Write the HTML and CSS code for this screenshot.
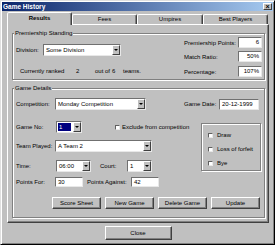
FILE: index.html
```html
<!DOCTYPE html>
<html lang="en">
<head>
    <meta charset="UTF-8">
    <title>Game History</title>
    <link rel="stylesheet" href="styles.css">
</head>
<body>

    <div class="window">
        <div class="titlebar">
            <span class="title">Game History</span>
            <span class="close-btn">×</span>
        </div>

        <div class="content">
            <div class="tabs">
                <div class="tab active">Results</div>
                <div class="tab">Fees</div>
                <div class="tab wide">Umpires</div>
                <div class="tab">Best Players</div>
            </div>

            <div class="panel">
                <fieldset class="group standing">
                    <legend>Premiership Standing</legend>
                    <div class="standing-cols">
                        <div class="standing-left">
                            <div class="row">
                                <span class="lbl w27">Division:</span>
                                <div class="select w78"><span class="select-text">Some Division</span><span class="arrow"></span></div>
                            </div>
                            <div class="ranked">
                                <span class="rk1">Currently ranked</span><span class="rk2">2</span><span class="rk3">out of</span><span class="rk4">6</span><span>teams.</span>
                            </div>
                        </div>
                        <div class="standing-right">
                            <div class="stat"><span class="lbl">Premiership Points:</span><div class="field num">6</div></div>
                            <div class="stat"><span class="lbl">Match Ratio:</span><div class="field num">50%</div></div>
                            <div class="stat"><span class="lbl">Percentage:</span><div class="field num">107%</div></div>
                        </div>
                    </div>
                </fieldset>

                <fieldset class="group details">
                    <legend>Game Details</legend>
                    <div class="row">
                        <span class="lbl w39">Competition:</span>
                        <div class="select w91"><span class="select-text">Monday Competition</span><span class="arrow"></span></div>
                        <div class="date">
                            <span class="lbl w35">Game Date:</span>
                            <div class="field w40">20-12-1999</div>
                        </div>
                    </div>

                    <div class="details-mid">
                        <div class="details-left">
                            <div class="row">
                                <span class="lbl w40">Game No:</span>
                                <div class="select w26"><span class="select-text"><span class="picked">1</span></span><span class="arrow"></span></div>
                                <span class="check exclude"></span><span>Exclude from competition</span>
                            </div>
                            <div class="row team">
                                <span class="lbl w39">Team Played:</span>
                                <div class="select w97"><span class="select-text">A Team 2</span><span class="arrow"></span></div>
                            </div>
                            <div class="row time">
                                <span class="lbl w40">Time:</span>
                                <div class="select w35"><span class="select-text">06:00</span><span class="arrow"></span></div>
                                <span class="lbl w27 court">Court:</span>
                                <div class="select w25"><span class="select-text">1</span><span class="arrow"></span></div>
                            </div>
                            <div class="row points">
                                <span class="lbl w39">Points For:</span>
                                <div class="field w28">30</div>
                                <span class="lbl w44 against">Points Against:</span>
                                <div class="field w28">42</div>
                            </div>
                        </div>

                        <div class="result-box">
                            <div class="check-row"><span class="check"></span><span>Draw</span></div>
                            <div class="check-row"><span class="check"></span><span>Loss of forfeit</span></div>
                            <div class="check-row"><span class="check"></span><span>Bye</span></div>
                        </div>
                    </div>

                    <div class="actions">
                        <button class="btn">Score Sheet</button>
                        <button class="btn">New Game</button>
                        <button class="btn">Delete Game</button>
                        <button class="btn">Update</button>
                    </div>
                </fieldset>
            </div>

            <div class="footer">
                <button class="btn btn-close">Close</button>
            </div>
        </div>
    </div>

</body>
</html>
```

FILE: styles.css
```css
* {
    box-sizing: border-box;
}

body {
    margin: 0;
    background: #c0c0c0;
    font-family: "Liberation Sans", Arial, sans-serif;
    font-size: 6px;
    color: #000;
}

.window {
    width: 275px;
    height: 245px;
    padding: 1px;
    background: #c0c0c0;
    border: 1px solid;
    border-color: #dfdfdf #000 #000 #dfdfdf;
    box-shadow: inset 1px 1px #fff, inset -1px -1px #808080;
}

.titlebar {
    display: flex;
    align-items: center;
    justify-content: space-between;
    height: 9px;
    padding: 0 1px;
    background: linear-gradient(to right, #0a246a, #a6caf0);
}

.title {
    color: #fff;
    font-weight: bold;
    font-size: 6.5px;
}

.close-btn {
    width: 9px;
    height: 7px;
    background: #c0c0c0;
    border: 1px solid;
    border-color: #fff #404040 #404040 #fff;
    font-size: 7px;
    font-weight: bold;
    line-height: 5px;
    text-align: center;
}

.content {
    padding: 1px 4px 0 5px;
}

/* tabs */
.tabs {
    display: flex;
    align-items: flex-end;
    height: 12px;
}

.tab {
    width: 65px;
    height: 10px;
    line-height: 9px;
    text-align: center;
    border: 1px solid;
    border-bottom: none;
    border-color: #fff #404040 transparent #fff;
    border-radius: 2px 2px 0 0;
    box-shadow: inset -1px 0 #808080;
}

.tab.wide {
    width: 66px;
}

.tab.active {
    position: relative;
    z-index: 1;
    height: 13px;
    margin-bottom: -1px;
    line-height: 11px;
    font-weight: bold;
    background: #c0c0c0;
}

.panel {
    height: 199px;
    padding: 4px 3px 0 4px;
    border: 1px solid;
    border-color: #fff #404040 #404040 #fff;
    box-shadow: inset -1px -1px #808080;
}

/* group boxes */
.group {
    margin: 0;
    padding: 0 2px 2px 3px;
    border: 1px solid #808080;
    box-shadow: inset 1px 1px #fff, 1px 1px #fff;
}

.group legend {
    margin-left: -2px;
    padding: 0 1px;
    line-height: 8px;
    background: #c0c0c0;
}

.details {
    margin-top: 4px;
    padding: 6px 3px 8px 3px;
}

.row {
    display: flex;
    align-items: center;
    height: 12px;
}

.lbl {
    flex-shrink: 0;
    white-space: nowrap;
}

.w25 { width: 25px; }
.w26 { width: 26px; }
.w27 { width: 27px; }
.w28 { width: 28px; }
.w35 { width: 35px; }
.w39 { width: 39px; }
.w40 { width: 40px; }
.w44 { width: 44px; }
.w78 { width: 78px; }
.w91 { width: 91px; }
.w97 { width: 97px; }

/* fake controls */
.select {
    display: flex;
    height: 12px;
    background: #fff;
    border: 1px solid;
    border-color: #707070 #e8e8e8 #e8e8e8 #707070;
}

.select-text {
    flex: 1;
    padding: 0 2px;
    line-height: 10px;
    overflow: hidden;
    white-space: nowrap;
}

.picked {
    display: block;
    margin-left: -1px;
    margin-top: 1px;
    padding-left: 1px;
    height: 8px;
    line-height: 8px;
    background: #000080;
    color: #fff;
}

.arrow {
    display: flex;
    align-items: center;
    justify-content: center;
    width: 8px;
    background: #c0c0c0;
    border: 1px solid;
    border-color: #fff #404040 #404040 #fff;
}

.arrow::after {
    content: "";
    border-left: 2px solid transparent;
    border-right: 2px solid transparent;
    border-top: 2px solid #000;
}

.field {
    height: 11px;
    padding: 0 2px;
    line-height: 9px;
    background: #fff;
    border: 1px solid;
    border-color: #707070 #e8e8e8 #e8e8e8 #707070;
    white-space: nowrap;
}

.field.num {
    width: 24px;
    text-align: right;
}

.check {
    width: 5px;
    height: 5px;
    flex-shrink: 0;
    background: #fff;
    border: 1px solid;
    border-color: #606060 #e8e8e8 #e8e8e8 #606060;
}

/* premiership standing */
.standing-cols {
    display: flex;
}

.standing-left {
    padding-top: 7px;
}

.ranked {
    display: flex;
    height: 8px;
    margin-top: 11px;
    padding-left: 4px;
    line-height: 8px;
}

.rk1 { width: 56px; }
.rk2 { width: 19px; }
.rk3 { width: 17px; }
.rk4 { width: 11px; }

.standing-right {
    display: flex;
    flex-direction: column;
    gap: 3px;
    margin-left: auto;
}

.stat {
    display: flex;
    align-items: center;
    height: 11px;
}

.stat .lbl {
    width: 54px;
}

.stat:last-child {
    margin-top: 1px;
}

/* game details */
.date {
    display: flex;
    align-items: center;
    margin-left: auto;
    margin-right: 2px;
}

.details-mid {
    display: flex;
    margin-top: 11px;
}

.exclude {
    margin-left: 33px;
    margin-right: 2px;
}

.row.team {
    margin-top: 7px;
}

.row.time {
    margin-top: 8px;
}

.court {
    margin-left: 9px;
}

.row.points {
    height: 10px;
    margin-top: 5px;
}

.points .field {
    height: 10px;
    line-height: 8px;
}

.against {
    margin-left: 4px;
}

.result-box {
    width: 60px;
    height: 48px;
    margin-top: 2px;
    margin-left: auto;
    padding: 7px 0 0 6px;
    border: 1px solid #808080;
    box-shadow: inset 1px 1px #fff, 1px 1px #fff;
}

.check-row {
    display: flex;
    align-items: center;
    gap: 4px;
    height: 8px;
    margin-bottom: 6px;
}

/* buttons */
.actions {
    display: flex;
    gap: 4px;
    margin-top: 10px;
    padding-left: 36px;
}

.btn {
    width: 49px;
    height: 12px;
    padding: 0;
    font-family: inherit;
    font-size: 6px;
    color: #000;
    background: #c0c0c0;
    border: 1px solid;
    border-color: #fff #404040 #404040 #fff;
    box-shadow: inset -1px -1px #808080;
}

.footer {
    display: flex;
    justify-content: center;
    padding-top: 3px;
}

.btn-close {
    width: 67px;
    height: 14px;
}
```
